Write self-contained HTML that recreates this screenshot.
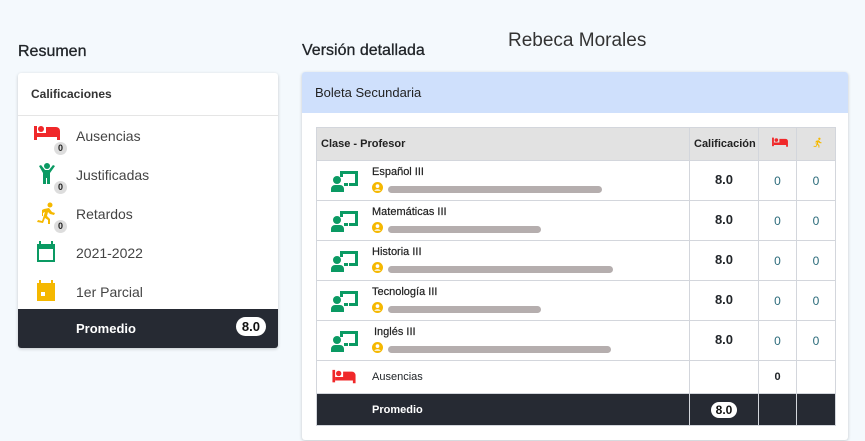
<!DOCTYPE html>
<html><head><meta charset="utf-8"><style>
*{box-sizing:border-box;margin:0;padding:0}
body{width:865px;height:441px;background:#f4f9fd;font-family:"Liberation Sans",sans-serif;position:relative;overflow:hidden;color:#212529}
.abs{position:absolute}
h2{position:absolute;font-weight:normal;font-size:16px;color:#212529;-webkit-text-stroke:0.3px #212529}
.card{position:absolute;background:#fff;border-radius:3px;box-shadow:0 1px 3px rgba(0,0,0,.2);overflow:hidden}
.lrow{position:absolute;left:0;width:260px;height:39px}
.lrow .t{position:absolute;left:58px;top:12px;font-size:14px;color:#444}
.lrow svg{position:absolute;left:16px;top:8px}
.badge{position:absolute;left:36px;top:26px;width:13px;height:13px;border-radius:50%;background:#ddd;font-size:9px;font-weight:bold;text-align:center;line-height:13px;color:#222}
table{position:absolute;left:14px;top:55px;width:519px;border-collapse:collapse;table-layout:fixed}
td,th{border:1px solid #d3d6dc;font-size:12px}
th{background:#e2e2e2;height:33px;text-align:left;padding-left:4px;font-weight:bold;color:#222;font-size:11px}
td.n{position:relative;height:40px}
.nm{position:absolute;left:55px;top:5px;font-size:11px;color:#222;-webkit-text-stroke:0.2px #222}
.bar{position:absolute;left:71px;top:25px;height:7px;border-radius:4px;background:#b5aeae}
.pi{position:absolute;left:55px;top:21px}
.ci{position:absolute;left:14px;top:9px}
.g{text-align:center;font-weight:bold;font-size:13px;vertical-align:top;padding-top:11px}
.z{text-align:center;color:#2a6a7a;font-size:12px}
.dark td{background:#262a33;border-color:#d3d6dc;color:#fff;height:32px;font-weight:bold}
.pill{display:inline-block;background:#fff;color:#111;border-radius:10px;padding:2px 6px;font-weight:bold;font-size:13px}
</style></head><body>
<h2 style="left:18px;top:43px">Resumen</h2>
<h2 style="left:302px;top:42px">Versión detallada</h2>
<div class="abs" style="left:508px;top:30px;font-size:19px;color:#333">Rebeca Morales</div>

<div class="card" style="left:18px;top:73px;width:260px;height:275px">
 <div style="height:43px;border-bottom:1px solid #e5e5e5;padding:14px 0 0 13px;font-size:12px;font-weight:bold;color:#333">Calificaciones</div>
 <div class="lrow" style="top:43px"><svg width="26" height="20" viewBox="0 0 26 20"><rect x="0" y="2" width="3" height="14" fill="#f0282a"/><circle cx="7" cy="5" r="3" fill="#f0282a"/><path d="M3 9h23v7h-3v-3H3z" fill="#f0282a"/><path d="M12 3h10a4 4 0 0 1 4 4v2H12z" fill="#f0282a"/></svg><div class="badge">0</div><div class="t">Ausencias</div></div>
 <div class="lrow" style="top:82px"><svg width="26" height="22" viewBox="0 0 26 22"><circle cx="13" cy="3" r="3" fill="#0a9a63"/><path d="M5 3l2-1 4 5h4l4-5 2 1-5 7v11h-3v-6h-1v6h-3V10z" fill="#0a9a63"/></svg><div class="badge">0</div><div class="t">Justificadas</div></div>
 <div class="lrow" style="top:121px"><svg width="26" height="22" viewBox="0 0 26 22"><circle cx="16" cy="3" r="2.5" fill="#f5b800"/><path d="M10 7l5-1 3 4 3 1-1 2-4-1-2-2-1 4 3 3v5h-2v-4l-3-2-2 5-6-1 1-2 4 1 3-9-2 1v3H8V8z" fill="#f5b800"/></svg><div class="badge">0</div><div class="t">Retardos</div></div>
 <div class="lrow" style="top:160px"><svg width="26" height="22" viewBox="0 0 26 22"><path d="M5 0h2v3h10V0h2v3h2v18H3V3h2z M5 8v11h14V8z" fill="#0a9a63" fill-rule="evenodd"/></svg><div class="t">2021-2022</div></div>
 <div class="lrow" style="top:199px"><svg width="26" height="22" viewBox="0 0 26 22"><path d="M5 0h2v3h10V0h2v3h2v18H3V3h2z M7 12v4h4v-4z" fill="#f5b800" fill-rule="evenodd"/></svg><div class="t">1er Parcial</div></div>
 <div style="position:absolute;left:0;top:236px;width:260px;height:39px;background:#262a33;color:#fff">
  <div style="position:absolute;left:58px;top:12px;font-size:13px;font-weight:bold">Promedio</div>
  <div class="pill" style="position:absolute;right:12px;top:8px">8.0</div>
 </div>
</div>

<div class="card" style="left:302px;top:72px;width:546px;height:368px">
 <div style="height:41px;background:#cfe0fc;padding:13px 0 0 13px;font-size:13px;color:#222">Boleta Secundaria</div>
 <table>
  <colgroup><col style="width:373px"><col style="width:69px"><col style="width:38px"><col style="width:39px"></colgroup>
  <tr><th>Clase - Profesor</th><th style="padding-left:4px">Calificación</th><th style="text-align:center"><svg width="16" height="11" viewBox="0 0 26 18"><rect x="0" y="1" width="3" height="14" fill="#f0282a"/><circle cx="7" cy="5" r="3" fill="#f0282a"/><path d="M3 9h23v7h-3v-3H3z M12 3h10a4 4 0 0 1 4 4v2H12z" fill="#f0282a"/></svg></th><th style="text-align:center"><svg width="12" height="13" viewBox="0 0 26 22"><circle cx="16" cy="3" r="2.5" fill="#f5b800"/><path d="M10 7l5-1 3 4 3 1-1 2-4-1-2-2-1 4 3 3v5h-2v-4l-3-2-2 5-6-1 1-2 4 1 3-9-2 1v3H8V8z" fill="#f5b800"/></svg></th></tr>
  <tr><td class="n"><svg class="ci" width="28" height="22" viewBox="0 0 28 22"><path d="M9 1h18v15h-9v-3h6V4H12v3H9z" fill="#0a9a63"/><circle cx="6" cy="10" r="4" fill="#0a9a63"/><path d="M0 22v-3a4 4 0 0 1 4-4h5a4 4 0 0 1 4 4v3z M13 13h4v3h-4z" fill="#0a9a63"/></svg><div class="nm">Español III</div><svg class="pi" width="11" height="11" viewBox="0 0 12 12"><circle cx="6" cy="6" r="6" fill="#f5b800"/><circle cx="6" cy="4.5" r="2" fill="#fff"/><path d="M2.5 9.5a4 3 0 0 1 7 0z" fill="#fff"/></svg><div class="bar" style="width:214px"></div></td><td class="g">8.0</td><td class="z">0</td><td class="z">0</td></tr>
  <tr><td class="n"><svg class="ci" width="28" height="22" viewBox="0 0 28 22"><path d="M9 1h18v15h-9v-3h6V4H12v3H9z" fill="#0a9a63"/><circle cx="6" cy="10" r="4" fill="#0a9a63"/><path d="M0 22v-3a4 4 0 0 1 4-4h5a4 4 0 0 1 4 4v3z M13 13h4v3h-4z" fill="#0a9a63"/></svg><div class="nm">Matemáticas III</div><svg class="pi" width="11" height="11" viewBox="0 0 12 12"><circle cx="6" cy="6" r="6" fill="#f5b800"/><circle cx="6" cy="4.5" r="2" fill="#fff"/><path d="M2.5 9.5a4 3 0 0 1 7 0z" fill="#fff"/></svg><div class="bar" style="width:153px"></div></td><td class="g">8.0</td><td class="z">0</td><td class="z">0</td></tr>
  <tr><td class="n"><svg class="ci" width="28" height="22" viewBox="0 0 28 22"><path d="M9 1h18v15h-9v-3h6V4H12v3H9z" fill="#0a9a63"/><circle cx="6" cy="10" r="4" fill="#0a9a63"/><path d="M0 22v-3a4 4 0 0 1 4-4h5a4 4 0 0 1 4 4v3z M13 13h4v3h-4z" fill="#0a9a63"/></svg><div class="nm">Historia III</div><svg class="pi" width="11" height="11" viewBox="0 0 12 12"><circle cx="6" cy="6" r="6" fill="#f5b800"/><circle cx="6" cy="4.5" r="2" fill="#fff"/><path d="M2.5 9.5a4 3 0 0 1 7 0z" fill="#fff"/></svg><div class="bar" style="width:225px"></div></td><td class="g">8.0</td><td class="z">0</td><td class="z">0</td></tr>
  <tr><td class="n"><svg class="ci" width="28" height="22" viewBox="0 0 28 22"><path d="M9 1h18v15h-9v-3h6V4H12v3H9z" fill="#0a9a63"/><circle cx="6" cy="10" r="4" fill="#0a9a63"/><path d="M0 22v-3a4 4 0 0 1 4-4h5a4 4 0 0 1 4 4v3z M13 13h4v3h-4z" fill="#0a9a63"/></svg><div class="nm">Tecnología III</div><svg class="pi" width="11" height="11" viewBox="0 0 12 12"><circle cx="6" cy="6" r="6" fill="#f5b800"/><circle cx="6" cy="4.5" r="2" fill="#fff"/><path d="M2.5 9.5a4 3 0 0 1 7 0z" fill="#fff"/></svg><div class="bar" style="width:153px"></div></td><td class="g">8.0</td><td class="z">0</td><td class="z">0</td></tr>
  <tr><td class="n"><svg class="ci" width="28" height="22" viewBox="0 0 28 22"><path d="M9 1h18v15h-9v-3h6V4H12v3H9z" fill="#0a9a63"/><circle cx="6" cy="10" r="4" fill="#0a9a63"/><path d="M0 22v-3a4 4 0 0 1 4-4h5a4 4 0 0 1 4 4v3z M13 13h4v3h-4z" fill="#0a9a63"/></svg><div class="nm" style="left:57px">Inglés III</div><svg class="pi" width="11" height="11" viewBox="0 0 12 12"><circle cx="6" cy="6" r="6" fill="#f5b800"/><circle cx="6" cy="4.5" r="2" fill="#fff"/><path d="M2.5 9.5a4 3 0 0 1 7 0z" fill="#fff"/></svg><div class="bar" style="width:223px"></div></td><td class="g">8.0</td><td class="z">0</td><td class="z">0</td></tr>
  <tr><td style="height:33px;position:relative"><svg class="abs" style="left:14px;top:8px" width="26" height="16" viewBox="0 0 26 18"><rect x="0" y="1" width="3" height="14" fill="#f0282a"/><circle cx="7" cy="5" r="3" fill="#f0282a"/><path d="M3 9h23v7h-3v-3H3z M12 3h10a4 4 0 0 1 4 4v2H12z" fill="#f0282a"/></svg><span style="position:absolute;left:55px;top:10px;font-size:11px">Ausencias</span></td><td></td><td style="text-align:center;font-weight:bold;font-size:11px">0</td><td></td></tr>
  <tr class="dark"><td style="padding-left:55px;font-size:11px">Promedio</td><td style="text-align:center"><span class="pill" style="font-size:12px;padding:1px 5px">8.0</span></td><td></td><td></td></tr>
 </table>
</div>
</body></html>
